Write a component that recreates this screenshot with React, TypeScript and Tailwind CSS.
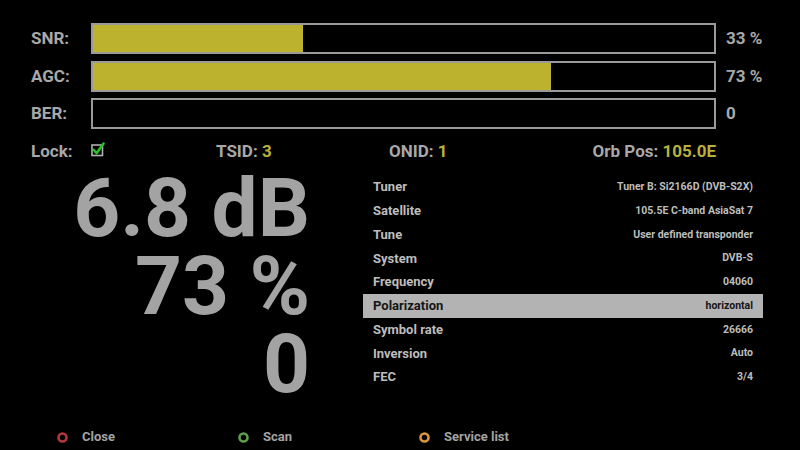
import React from "react";

const bars = [
  { label: "SNR:", pct: 33.8, value: "33 %" },
  { label: "AGC:", pct: 73.8, value: "73 %" },
  { label: "BER:", pct: 0, value: "0" },
];

const rows: [string, string][] = [
  ["Tuner", "Tuner B: Si2166D (DVB-S2X)"],
  ["Satellite", "105.5E C-band AsiaSat 7"],
  ["Tune", "User defined transponder"],
  ["System", "DVB-S"],
  ["Frequency", "04060"],
  ["Polarization", "horizontal"],
  ["Symbol rate", "26666"],
  ["Inversion", "Auto"],
  ["FEC", "3/4"],
];

function Ring({ color }: { color: string }) {
  return (
    <svg width="11" height="11" viewBox="0 0 11 11" className="shrink-0">
      <circle cx="5.5" cy="5.5" r="4" fill="none" stroke={color} strokeWidth="2.6" />
    </svg>
  );
}

export default function App() {
  return (
    <div
      className="w-[800px] h-[450px] bg-black flex flex-col overflow-hidden text-[#a8a8a8]"
      style={{ fontFamily: "Roboto, 'Liberation Sans', sans-serif" }}
    >
      <div className="flex flex-col gap-[6.6px] pt-[23px] pl-[31px]">
        {bars.map((b) => (
          <div key={b.label} className="flex items-center h-[31px]">
            <div className="w-[60px] text-[17px] font-bold leading-none">{b.label}</div>
            <div className="w-[625px] h-[31px] border-2 border-[#9a9a9a] bg-black">
              <div className="h-full bg-[#bcb22e]" style={{ width: `${b.pct}%` }} />
            </div>
            <div className="ml-[10px] text-[17px] font-bold leading-none whitespace-nowrap">{b.value}</div>
          </div>
        ))}
      </div>

      <div className="flex items-center h-[22px] mt-[11px] pl-[31px] text-[17px] font-bold leading-none whitespace-nowrap">
        <div className="w-[185px] flex items-center">
          <span className="w-[60px]">Lock:</span>
          <svg width="16" height="16" viewBox="0 0 16 16" className="-mt-[4px]">
            <rect x="1" y="4" width="10.5" height="10.5" fill="none" stroke="#b0b0b0" strokeWidth="1.6" />
            <path d="M2.8 9 L5.6 12.2 L12.5 2.5" fill="none" stroke="#22c42a" strokeWidth="2.6" strokeLinecap="round" strokeLinejoin="round" />
          </svg>
        </div>
        <div className="w-[173px]">
          TSID: <span className="text-[#b9b13a]">3</span>
        </div>
        <div className="w-[200px]">
          ONID: <span className="text-[#b9b13a]">1</span>
        </div>
        <div className="w-[127px] flex justify-end">
          <span>
            Orb Pos: <span className="text-[#b9b13a]">105.0E</span>
          </span>
        </div>
      </div>

      <div className="flex mt-[7px]">
        <div className="w-[310px] flex flex-col items-end text-[82px] font-bold leading-[78px] text-[#a3a3a3] whitespace-nowrap">
          <div>6.8 dB</div>
          <div>73 %</div>
          <div>0</div>
        </div>
        <div className="ml-[53px] w-[400px] mt-[6px] flex flex-col">
          {rows.map(([k, v]) => {
            const hl = k === "Polarization";
            return (
              <div
                key={k}
                className={`h-[23.75px] flex items-center justify-between px-[10px] whitespace-nowrap ${
                  hl ? "bg-[#b3b3b3] text-[#151515]" : "text-[#bdbdbd]"
                }`}
              >
                <span className="text-[13px] font-bold">{k}</span>
                <span className="text-[10.5px] font-bold">{v}</span>
              </div>
            );
          })}
        </div>
      </div>

      <div className="mt-auto h-[26px] flex items-center pl-[57px] text-[13px] font-bold text-[#a3a3a3]">
        <div className="w-[181px] flex items-center gap-[14px]">
          <Ring color="#b23a3a" />
          <span>Close</span>
        </div>
        <div className="w-[181px] flex items-center gap-[14px]">
          <Ring color="#5e9e4c" />
          <span>Scan</span>
        </div>
        <div className="w-[181px] flex items-center gap-[14px]">
          <Ring color="#dc963a" />
          <span>Service list</span>
        </div>
      </div>
    </div>
  );
}
